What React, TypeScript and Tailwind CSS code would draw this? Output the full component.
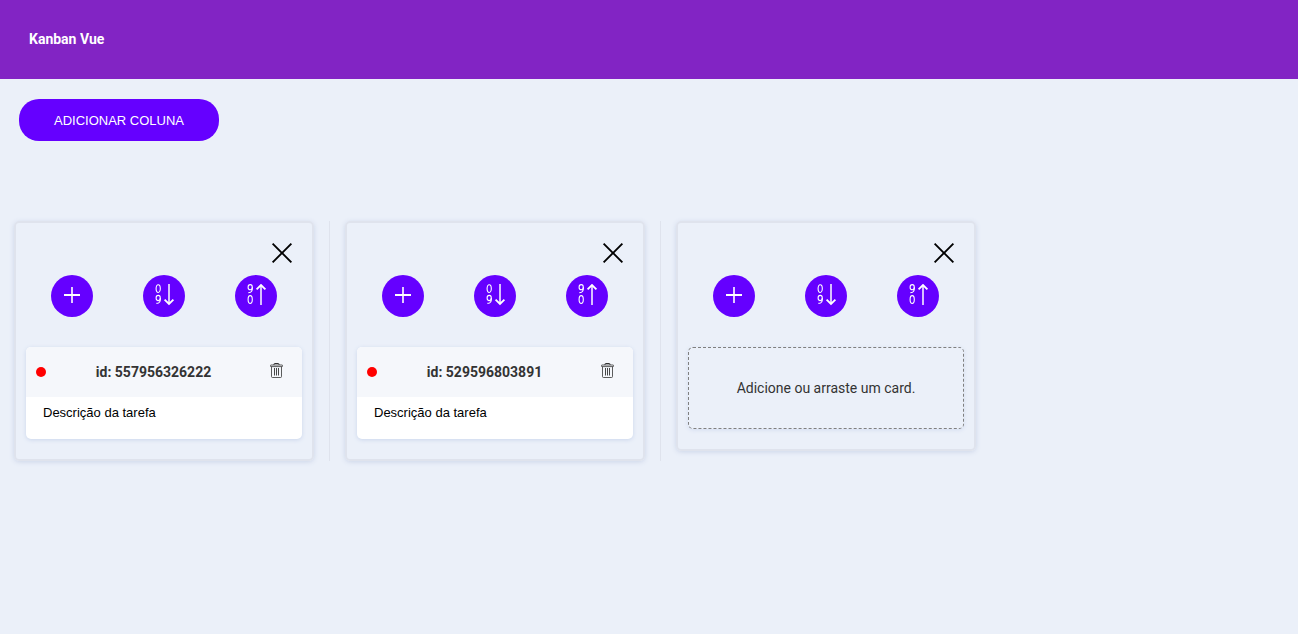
import { useState } from "react";

type Task = { id: number; text: string };
type Column = { key: number; tasks: Task[] };

const initialColumns: Column[] = [
  { key: 1, tasks: [{ id: 557956326222, text: "Descrição da tarefa" }] },
  { key: 2, tasks: [{ id: 529596803891, text: "Descrição da tarefa" }] },
  { key: 3, tasks: [] },
];

function CloseIcon() {
  return (
    <svg viewBox="0 0 512 512" className="size-[30px]" fill="currentColor" aria-hidden="true">
      <polygon points="427.314 107.313 404.686 84.687 256 233.373 107.314 84.687 84.686 107.313 233.373 256 84.686 404.687 107.314 427.313 256 278.627 404.686 427.313 427.314 404.687 278.627 256 427.314 107.313" />
    </svg>
  );
}

function PlusIcon() {
  return (
    <svg viewBox="0 0 22 22" className="size-[22px]" fill="currentColor" aria-hidden="true">
      <rect x="3" y="10" width="16" height="2" />
      <rect x="10.2" y="3" width="1.6" height="16" />
    </svg>
  );
}

function SortUpIcon() {
  return (
    <svg viewBox="0 0 22 22" className="size-[22px]" fill="none" stroke="currentColor" strokeWidth="1.1" aria-hidden="true">
      <ellipse cx="5.2" cy="3.2" rx="2.1" ry="2.6" />
      <path d="M7.3 3.2C7.5 6.6 6.6 8.6 3.4 8.6" />
      <ellipse cx="5.2" cy="15.5" rx="2.1" ry="3.9" />
      <path d="M16 21V1" strokeWidth="1.5" />
      <path d="M11.6 5.4L16 1l4.4 4.4" strokeWidth="1.8" />
    </svg>
  );
}

function SortDownIcon() {
  return (
    <svg viewBox="0 0 22 22" className="size-[22px]" fill="none" stroke="currentColor" strokeWidth="1.1" aria-hidden="true">
      <ellipse cx="5.2" cy="4.6" rx="2.1" ry="3.9" />
      <ellipse cx="5.2" cy="14" rx="2.1" ry="2.6" />
      <path d="M7.3 14C7.5 17.4 6.6 19.4 3.4 19.4" />
      <path d="M16 0v20" strokeWidth="1.5" />
      <path d="M11.6 15.6L16 20l4.4-4.4" strokeWidth="1.8" />
    </svg>
  );
}

function TrashIcon() {
  return (
    <svg viewBox="0 0 13 15" className="h-[15px] w-[13px]" fill="none" stroke="currentColor" aria-hidden="true">
      <path d="M4 2V1.2Q4 0.5 4.7 0.5h3.6Q9 0.5 9 1.2V2" />
      <rect x="0.4" y="2" width="12.2" height="1.6" rx="0.6" strokeWidth="0.8" />
      <path d="M1.5 3.8v9.7q0 1 1 1h8q1 0 1-1V3.8" strokeWidth="0.8" />
      <path d="M4.5 5v7.5M6.5 5v7.5M8.5 5v7.5" strokeWidth="0.9" />
    </svg>
  );
}

const roundButton =
  "flex size-[42px] items-center justify-center rounded-full bg-[#6500ff] pb-0.5 text-white";

export default function App() {
  const [columns, setColumns] = useState(initialColumns);

  const update = (key: number, change: (tasks: Task[]) => Task[]) =>
    setColumns((all) => all.map((c) => (c.key === key ? { ...c, tasks: change(c.tasks) } : c)));

  const newTask = (): Task => ({
    id: Math.floor(Math.random() * 1e12),
    text: "Descrição da tarefa",
  });

  return (
    <div className="min-h-screen bg-[#ebf0f9] font-[Roboto,sans-serif] text-[#333333]">
      <header className="bg-[#8224c4] px-[29px] py-7">
        <h1 className="text-sm leading-[23px] font-bold text-white">Kanban Vue</h1>
      </header>
      <main>
        <div className="px-[19px] pt-5 pb-[60px]">
          <button
            type="button"
            className="h-[42px] w-[200px] rounded-[20px] bg-[#6500ff] pt-0.5 font-['Liberation_Sans',sans-serif] text-[13px] text-white uppercase"
            onClick={() => setColumns((all) => [...all, { key: Date.now(), tasks: [] }])}
          >
            Adicionar coluna
          </button>
        </div>
        <div className="flex items-start overflow-x-auto px-3.5 py-5">
          {columns.map((column, index) => (
            <div key={column.key} className="flex shrink-0">
              <section className="w-[300px] rounded-[5px] border-2 border-[#dfe3ed] px-2.5 pt-[15px] pb-5 shadow-[0_1px_5px_#ccd5e9]">
                <div className="flex justify-end pr-[5px]">
                  <button
                    type="button"
                    aria-label="Remover coluna"
                    className="text-black"
                    onClick={() => setColumns((all) => all.filter((c) => c.key !== column.key))}
                  >
                    <CloseIcon />
                  </button>
                </div>
                <div className="mt-[7px] mb-[30px] flex justify-around">
                  <button
                    type="button"
                    aria-label="Adicionar card"
                    className={roundButton}
                    onClick={() => update(column.key, (tasks) => [...tasks, newTask()])}
                  >
                    <PlusIcon />
                  </button>
                  <button
                    type="button"
                    aria-label="Ordenar crescente"
                    className={roundButton}
                    onClick={() => update(column.key, (tasks) => [...tasks].sort((a, b) => a.id - b.id))}
                  >
                    <SortDownIcon />
                  </button>
                  <button
                    type="button"
                    aria-label="Ordenar decrescente"
                    className={roundButton}
                    onClick={() => update(column.key, (tasks) => [...tasks].sort((a, b) => b.id - a.id))}
                  >
                    <SortUpIcon />
                  </button>
                </div>
                {column.tasks.length === 0 ? (
                  <div className="rounded-[5px] border border-dashed border-[#808080] py-[30px] text-center text-sm shadow-[0_1px_4px_#d3dcf0]">
                    Adicione ou arraste um card.
                  </div>
                ) : (
                  <div className="flex flex-col gap-2.5">
                    {column.tasks.map((task) => (
                      <article
                        key={task.id}
                        className="overflow-hidden rounded-[5px] bg-white shadow-[0_1px_4px_#cbd6ec]"
                      >
                        <header className="flex h-[50px] items-center justify-between bg-[#f5f7fb] px-2.5">
                          <span className="size-2.5 rounded-full bg-[#ff0000]" />
                          <h2 className="text-sm font-bold">id: {task.id}</h2>
                          <button
                            type="button"
                            aria-label="Excluir card"
                            className="px-[9px] pb-[3px]"
                            onClick={() => update(column.key, (tasks) => tasks.filter((t) => t.id !== task.id))}
                          >
                            <TrashIcon />
                          </button>
                        </header>
                        <textarea
                          aria-label="Descrição"
                          rows={1}
                          defaultValue={task.text}
                          className="block h-[42px] w-full resize-none overflow-hidden px-[17px] py-2 font-['Liberation_Sans',sans-serif] text-[13px] leading-4 text-black outline-none"
                        />
                      </article>
                    ))}
                  </div>
                )}
              </section>
              {index < columns.length - 1 && <div className="mx-[15px] w-px bg-[#dfe3ed]" />}
            </div>
          ))}
        </div>
      </main>
    </div>
  );
}
